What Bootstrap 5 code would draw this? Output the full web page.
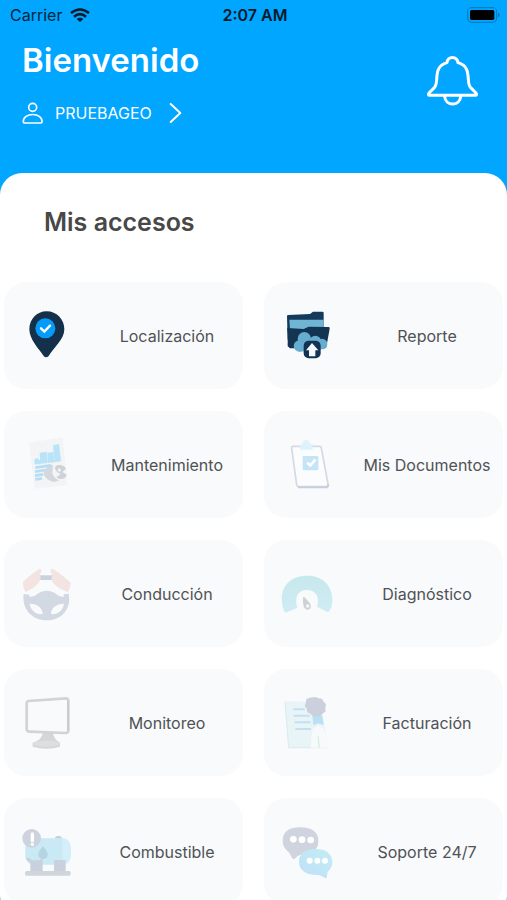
<!DOCTYPE html>
<html lang="es">
<head>
<meta charset="utf-8">
<meta name="viewport" content="width=device-width, initial-scale=1">
<title>Mis accesos</title>
<link href="https://cdn.jsdelivr.net/npm/bootstrap@5.3.0/dist/css/bootstrap.min.css" rel="stylesheet">
<style>
body { font-family: Inter, "Liberation Sans", sans-serif; background: #00a6ff; }
.app-status { height: 30px; padding: 0 7px 0 10px; font-size: 16px; line-height: 30px; color: #04243a; }
.app-status > * { flex: 1 1 0; }
.app-clock { color: #031a2a; font-weight: 600; }
.app-head { height: 143px; padding: 8px 28px 0 22px; }
.app-title { font-size: 33px; line-height: 44px; font-weight: 600; }
.user-link { margin-top: 20px; gap: 12px; font-size: 16px; line-height: 22px; }
.bell-btn { margin-top: 16px; }
.sheet { border-radius: 22px; padding: 0 4px 12px; }
.sheet-title { font-size: 25px; line-height: 36px; font-weight: 600; color: #484848; padding: 31px 40px 42px; }
.tiles { grid-template-columns: 1fr 1fr; gap: 22px 21px; }
.tile { height: 107px; border-radius: 22px; background: #f8fafc; color: #505255; font-size: 16px; padding: 0 0 0 12px; gap: 15px; }
.tile svg { flex: none; }
</style>
</head>
<body>
<div class="vh-100 overflow-hidden d-flex flex-column">
  <div class="app-status d-flex align-items-center flex-shrink-0">
    <div class="d-flex align-items-center gap-2"><span>Carrier</span>
      <svg width="20" height="14" viewBox="0 0 60 42" fill="none" stroke="#031a2a" stroke-width="8" aria-hidden="true"><path d="M3 15Q30-6 57 15M12 26Q30 11 48 26"/><path d="M20 33Q30 25 40 33L30 42z" fill="#031a2a" stroke="none"/></svg>
    </div>
    <div class="app-clock text-center text-nowrap">2:07 AM</div>
    <div class="d-flex justify-content-end">
      <svg width="33" height="16" viewBox="0 0 99 48" aria-hidden="true"><rect x="2" y="2" width="87" height="44" rx="12" fill="none" stroke="#0576b4" stroke-width="3"/><rect x="9" y="9" width="73" height="30" rx="5" fill="#000"/><path d="M93 17q5 2 5 7t-5 7z" fill="#0576b4"/></svg>
    </div>
  </div>
  <header class="app-head d-flex justify-content-between align-items-start text-white flex-shrink-0">
    <div>
      <h1 class="app-title m-0">Bienvenido</h1>
      <a href="#" class="user-link d-flex align-items-center text-white text-decoration-none">
        <svg width="21" height="22" viewBox="0 0 63 66" fill="none" stroke="#fff" stroke-width="5" aria-hidden="true"><circle cx="32" cy="16" r="12"/><path d="M4 60C2 30 62 30 60 60q0 3-3 3H7q-3 0-3-3z"/></svg>
        <span>PRUEBAGEO</span>
        <svg class="ms-1" width="14" height="22" viewBox="0 0 42 66" fill="none" stroke="#fff" stroke-width="6" stroke-linecap="round" stroke-linejoin="round" aria-hidden="true"><path d="M8 6l29 27L8 60"/></svg>
      </a>
    </div>
    <button type="button" class="bell-btn btn p-0 border-0 lh-1" aria-label="Notificaciones">
      <svg width="52" height="53" viewBox="522 161 156 159" fill="none" stroke="#fff" stroke-width="9" stroke-linejoin="round"><path d="M582 187C584 166 612 166 615 187C660 199 637 247 653 262L669 278Q673 285 667 285H530Q524 285 528 278L544 262C560 247 537 199 582 187zM575 288C577 319 621 319 623 288"/></svg>
    </button>
  </header>
  <main class="sheet bg-white flex-shrink-0">
    <h2 class="sheet-title m-0">Mis accesos</h2>
    <div class="tiles d-grid">
      <button type="button" class="tile border-0 d-flex align-items-center">
        <svg width="60" height="60" viewBox="51 437 180 180" aria-hidden="true"><path d="M143 453C113 453 91 477 91 507C91 537 119 565 134 587Q141 595 149 587C165 561 196 537 196 507C196 477 173 453 143 453z" fill="#14304a"/><circle cx="139" cy="504" r="30" fill="#069bf8"/><path d="M126 504l10 10 17-18" fill="none" stroke="#fff" stroke-width="7" stroke-linecap="round"/></svg>
        <span class="flex-fill">Localización</span>
      </button>
      <button type="button" class="tile border-0 d-flex align-items-center">
        <svg width="60" height="60" viewBox="72 107 180 180" aria-hidden="true"><path d="M105 138q0-4 4-4l65-3 9-7h28q4 0 4 4v50l-108 30z" fill="#14395a"/><path d="M112 148h103v30H114z" fill="#70b6d2"/><path d="M106 173l49 3 15-7 60 1q4 0 3 5l-10 55q-1 4-5 4h-103q-4 0-4-4z" fill="#143453"/><path d="M107 165l6 65h-2q-4 0-4-4z" fill="#143453"/><g fill="#66add0"><circle cx="157" cy="205" r="20"/><circle cx="142" cy="227" r="17"/><circle cx="190" cy="213" r="17"/><circle cx="210" cy="221" r="16"/><path d="M140 213h70v24l-68 7z"/></g><rect x="155" y="211" width="51" height="53" rx="15" fill="#123352"/><path d="M180 218l19 22h-9v18h-19v-18h-9z" fill="#f3f9fd"/></svg>
        <span class="flex-fill">Reporte</span>
      </button>
      <button type="button" class="tile border-0 d-flex align-items-center">
        <svg width="60" height="60" viewBox="51 104 180 180" aria-hidden="true"><path d="M89 127l102-16 14 143-98 11z" fill="#f3f4f6"/><path d="M106 181q0-7 10-7l8 7v11h-17zM122 157l21-3 2 34-21 2zM145 157l18-2 3 31-20 2zM162 135l18-4 6 52-19 3z" fill="#b9e3f7"/><path d="M109 202l47-7M108 214l32-5M108 226l25-4M109 237l20-3" stroke="#b5def4" stroke-width="8"/><path d="M162 193q-26 7-28 24 2 21 32 28l14-5q-17-7-20-22z" fill="#d4d7dc"/><path d="M168 201c6-11 26-9 33 4l-11 10 13 8c-3 15-23 17-30 7l13-9q-17-5-18-20z" fill="#ced1d6"/><circle cx="181" cy="209" r="5" fill="#f1f3f5"/></svg>
        <span class="flex-fill">Mantenimiento</span>
      </button>
      <button type="button" class="tile border-0 d-flex align-items-center">
        <svg width="60" height="60" viewBox="72 104 180 180" aria-hidden="true"><path d="M122 138h80q5 0 6 5l20 108q1 8-7 8h-81q-5 0-6-6L119 144q0-6 3-6z" fill="#fbfcfd" stroke="#d5d9e4" stroke-width="5"/><path d="M138 261h83q7 0 8-9" fill="none" stroke="#c8cedb" stroke-width="6"/><path d="M143 138q0-5 8-6 0-13 12-13 10 0 11 12h8v17h-36z" fill="#def2fb"/><rect x="152" y="167" width="47" height="43" rx="4" fill="#c5e5f7"/><path d="M165 187l10 8 15-17" fill="none" stroke="#fff" stroke-width="8"/></svg>
        <span class="flex-fill">Mis Documentos</span>
      </button>
      <button type="button" class="tile border-0 d-flex align-items-center">
        <svg width="60" height="60" viewBox="51 100 180 180" aria-hidden="true"><path d="M118 134h48v14h-48z" fill="#c8d1dc"/><path d="M74 190L91 192Q90 197 93 199Q108 197 121 186Q144 174 166 186Q178 197 193 199Q195 196 194 191L209 189C218 234 188 269 143 269C98 269 68 234 74 190z" fill="#d3d9e3"/><path d="M92 219C116 219 131 233 131 250C112 253 95 240 92 219zM195 219C171 219 156 233 156 250C175 253 192 240 195 219z" fill="#f9fafc"/><path d="M72 153l26-22 24-17q7 2 5 10l-7 9 6 7-6 15-17 17-23 12q-8-10-8-31zM215 156l-27-23-27-19q-9 1-6 11l7 9-6 7 6 16 18 15 26 13q6-8 9-29z" fill="#f3e3e1"/></svg>
        <span class="flex-fill">Conducción</span>
      </button>
      <button type="button" class="tile border-0 d-flex align-items-center">
        <svg width="60" height="60" viewBox="72 100 180 180" aria-hidden="true"><defs><linearGradient id="gaugeFill" x1="0" x2="0" y1="0" y2="1"><stop stop-color="#c7e8ed"/><stop offset="1" stop-color="#d0ecf4"/></linearGradient></defs><path d="M89 203C91 160 121 135 166 135C212 135 239 164 241 203Q242 224 233 240Q229 246 224 243L195 228C204 204 194 178 166 178C135 178 127 202 136 231L105 245Q99 247 96 241Q89 224 89 203z" fill="url(#gaugeFill)"/><path d="M153 200q2-3 6 1l14 16q6 8 1 17-9 7-17-3-5-9-4-31z" fill="#ccd2d4"/><circle cx="167" cy="226" r="5" fill="#f8fafc"/></svg>
        <span class="flex-fill">Diagnóstico</span>
      </button>
      <button type="button" class="tile border-0 d-flex align-items-center">
        <svg width="60" height="60" viewBox="51 98 180 180" aria-hidden="true"><path d="M132 218h30q3 20 21 29v12q-40 12-82 0v-12q26-6 31-29z" fill="#d5d6d8"/><ellipse cx="142" cy="250" rx="41" ry="9" fill="#dddedf"/><path d="M88 122l112-8q8 0 8 8v88q0 8-8 8l-108-4q-9 0-9-8v-76q0-7 5-8z" fill="#f9fafb" stroke="#d2d3d5" stroke-width="8"/><path d="M207 121v88" stroke="#cacbcd" stroke-width="6"/></svg>
        <span class="flex-fill">Monitoreo</span>
      </button>
      <button type="button" class="tile border-0 d-flex align-items-center">
        <svg width="60" height="60" viewBox="72 98 180 180" aria-hidden="true"><path d="M99 123l105 2 25 138H109z" fill="#e9f4f7"/><path d="M99 124l11 138h117" fill="none" stroke="#d9ebee" stroke-width="3"/><path d="M124 147h34M125 166h48M128 186h48M130 206h47" stroke="#c2e0f3" stroke-width="6"/><path d="M181 166h30l4 28-17-5-14 6z" fill="#b9e0f5"/><path d="M190 110l10 4 10 1 5 9 7 8-2 11 1 10-9 7-7 8-11-1-10 2-8-8-10-5-2-11-6-9 4-10 1-10 10-4z" fill="#cbd1dc"/><path d="M181 207l19-13 17 14 13 54h-54z" fill="#f6fafb"/><path d="M198 228l4 33" stroke="#d2e6df" stroke-width="3"/></svg>
        <span class="flex-fill">Facturación</span>
      </button>
      <button type="button" class="tile border-0 d-flex align-items-center">
        <svg width="60" height="60" viewBox="51 125 180 180" aria-hidden="true"><rect x="79" y="174" width="136" height="79" rx="25" fill="#c9e9f4"/><path d="M190 174q26 3 25 36v15q-1 25-25 28z" fill="#d4effa"/><path d="M168 174q0-7 10-7t11 7z" fill="#c4ced9"/><path d="M80 232q15 0 18 8h25q4-6 8-6v38H94v-26q-10-4-14-14zM165 239h35v33h-35z" fill="#c9d1df"/><rect x="78" y="272" width="137" height="14" rx="5" fill="#d0d5dc"/><path d="M132 198q14 15 14 25a14 13 0 0 1-28 0q0-10 14-25z" fill="#b6d3e2"/><circle cx="98" cy="174" r="28" fill="#ccd3de"/><path d="M100 161v20" stroke="#fff" stroke-width="10" stroke-linecap="round"/><circle cx="100" cy="192" r="5" fill="#fff"/></svg>
        <span class="flex-fill">Combustible</span>
      </button>
      <button type="button" class="tile border-0 d-flex align-items-center">
        <svg width="60" height="60" viewBox="72 125 180 180" aria-hidden="true"><defs><linearGradient id="chatFill" x1="1" x2="0" y1="0" y2="1"><stop stop-color="#c3edf5"/><stop offset="1" stop-color="#bfdff8"/></linearGradient></defs><path d="M92 183c0-30 19-42 53-42 36 0 54 15 54 42 0 29-24 41-54 40q-9 3-17 12-5 3-9-4l-7-14Q92 203 92 183z" fill="#cfd4de"/><path d="M141 245c0-25 18-39 49-39s51 13 51 40q0 17-14 28l-3 18q-3 4-9-1l-13-7c-35 2-61-12-61-39z" fill="url(#chatFill)"/><g fill="#fff"><circle cx="124" cy="177" r="10"/><circle cx="150" cy="178" r="10"/><circle cx="176" cy="179" r="10"/><circle cx="173" cy="241" r="9"/><circle cx="196" cy="241" r="9"/><circle cx="219" cy="241" r="9"/></g></svg>
        <span class="flex-fill">Soporte 24/7</span>
      </button>
    </div>
  </main>
</div>
<script src="https://cdn.jsdelivr.net/npm/bootstrap@5.3.0/dist/js/bootstrap.bundle.min.js"></script>
</body>
</html>
